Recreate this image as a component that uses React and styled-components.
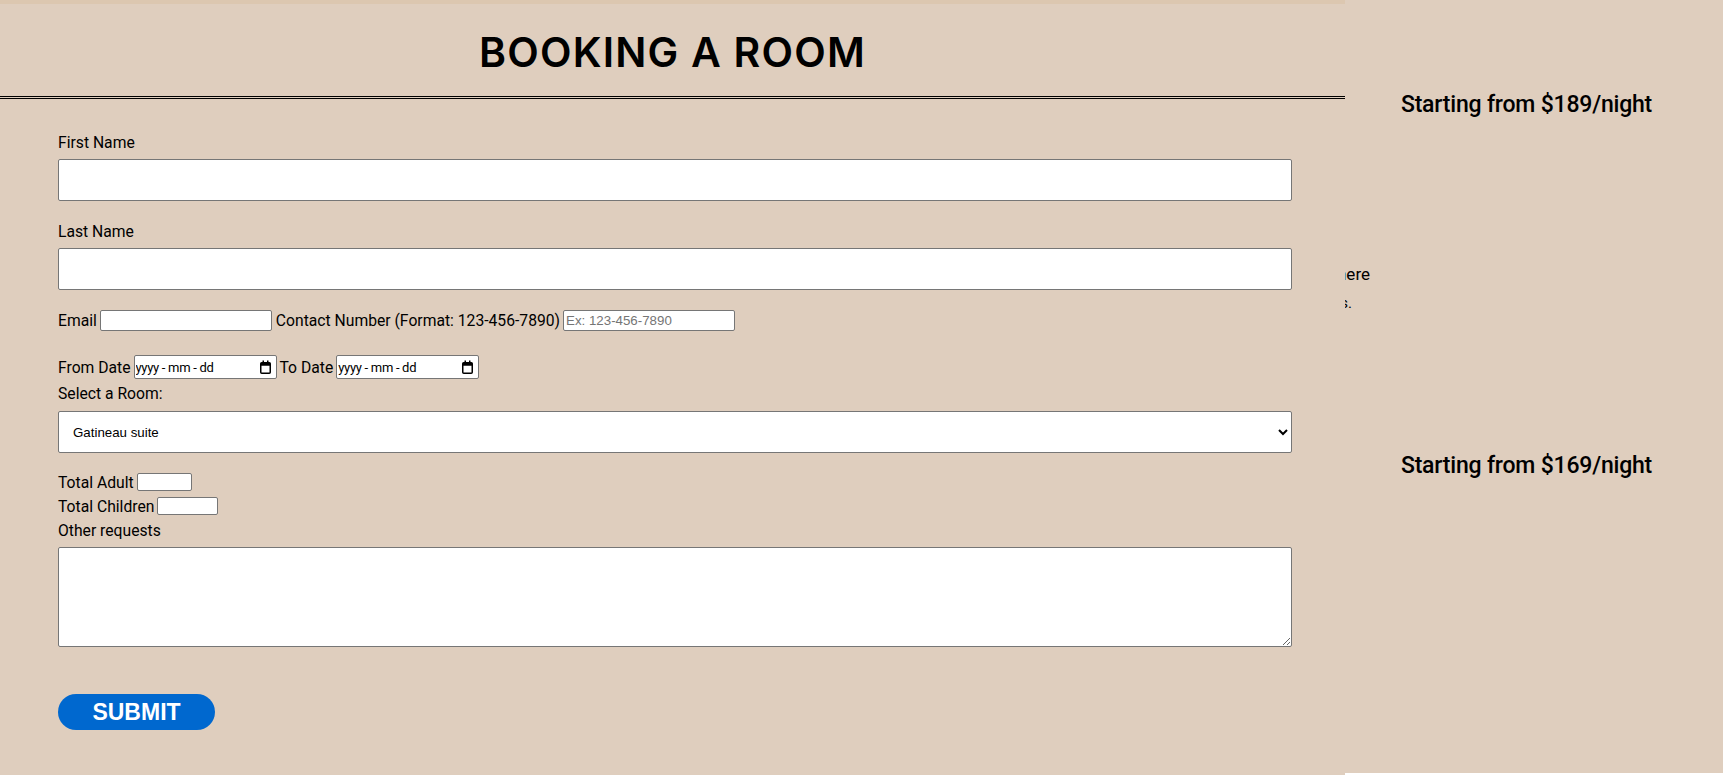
import styled, { createGlobalStyle } from 'styled-components'

const GlobalStyle = createGlobalStyle`
  html, body {
    margin: 0;
    padding: 0;
    background: #ffffff;
  }
  body {
    font-family: Roboto, "Liberation Sans", sans-serif;
    color: #000;
  }
`

const Page = styled.div`
  height: 773px;
  background: #dfcebe;
  padding-top: 90px;
  box-sizing: border-box;
  overflow: hidden;
`

const RoomCard = styled.section`
  display: grid;
  grid-template-columns: 1fr 393px;
  margin-top: ${p => p.$top || 0}px;
`

const Price = styled.h3`
  grid-column: 2;
  margin: 0;
  text-align: center;
  font-size: 23px;
  font-weight: 500;
  line-height: 30px;
  letter-spacing: -0.2px;
`

const Description = styled.div`
  grid-column: 1 / -1;
  margin-top: 140px;
`

const DescLine = styled.p`
  margin: 0;
  text-align: right;
  font-family: Roboto, sans-serif;
  font-size: ${p => p.$size}px;
  line-height: 29px;
  white-space: nowrap;
  padding-right: ${p => p.$inset}px;
`

const Overlay = styled.div`
  position: fixed;
  top: 0;
  left: 0;
  width: 1345px;
  height: 100vh;
  background: #dfcebe;
  border-top: 4px solid #dcc7b0;
  box-sizing: border-box;
  font-family: Roboto, "Liberation Sans", sans-serif;
`

const Header = styled.header`
  height: 92px;
  display: flex;
  align-items: center;
  justify-content: center;
  border-bottom: 3px double #000;
`

const Title = styled.h1`
  margin: 4px 0 0;
  font-family: Inter, "DejaVu Sans", sans-serif;
  font-weight: 600;
  font-size: 41px;
  letter-spacing: 1.2px;
  color: #000;
`

const Form = styled.form`
  padding: 33px 53px 0 58px;
`

const Label = styled.label`
  display: block;
  font-size: 15.7px;
  line-height: 21px;
  margin-bottom: ${p => p.$after ?? 6}px;
`

const WideInput = styled.input`
  display: block;
  width: 100%;
  height: 42px;
  box-sizing: border-box;
  border: 1px solid #767676;
  border-radius: 2px;
  background: #fff;
  margin: 0 0 20px;
`

const InlineRow = styled.div`
  display: flex;
  align-items: center;
  gap: 3px;
  height: ${p => p.$h || 21}px;
  margin-bottom: ${p => p.$after || 0}px;
  font-size: 15.7px;
`

const SmallInput = styled.input`
  width: ${p => p.$w}px;
  height: ${p => p.$h || 21}px;
  box-sizing: border-box;
  border: 1px solid #767676;
  border-radius: 2px;
  background: #fff;
  padding: 1px 2px;
  margin: 0 1px 0 0;
  font-family: "Liberation Sans", Arial, sans-serif;
  font-size: 13.3px;

  &::placeholder {
    color: #757575;
  }
`

const DateField = styled.span`
  display: inline-flex;
  align-items: center;
  width: 143px;
  height: 24px;
  box-sizing: border-box;
  border: 1px solid #767676;
  border-radius: 2px;
  background: #fff;
  padding: 0 4px 0 1px;
`

const DateText = styled.input`
  flex: 1;
  min-width: 0;
  border: none;
  outline: none;
  padding: 0;
  background: transparent;
  font-family: Roboto, sans-serif;
  font-size: 13px;
  letter-spacing: -0.3px;

  &::placeholder {
    color: #000;
  }
`

const RoomSelect = styled.select`
  display: block;
  width: 100%;
  height: 42px;
  box-sizing: border-box;
  border: 1px solid #767676;
  border-radius: 2px;
  background: #fff;
  padding: 0 10px;
  font-family: "Liberation Sans", Arial, sans-serif;
  font-size: 13.3px;
  color: #000;
  margin-bottom: 17px;
`

const Requests = styled.textarea`
  display: block;
  width: 100%;
  height: 100px;
  box-sizing: border-box;
  border: 1px solid #767676;
  border-radius: 2px;
  background: #fff;
  margin: 5px 0 47px;
`

const SubmitButton = styled.button`
  width: 157px;
  height: 36px;
  border: none;
  border-radius: 18px;
  background: #0068cf;
  color: #fff;
  font-family: "Liberation Sans", Arial, sans-serif;
  font-weight: 700;
  font-size: 23px;
  cursor: pointer;
`

function CalendarIcon() {
  return (
    <svg width="13" height="14" viewBox="0 0 13 14" aria-hidden="true">
      <rect x="1.75" y="2.75" width="9.5" height="10.5" rx="1" fill="none" stroke="#000" strokeWidth="1.5" />
      <rect x="1.75" y="2.75" width="9.5" height="3" fill="#000" />
      <rect x="3.5" y="0.5" width="1.5" height="3" fill="#000" />
      <rect x="8" y="0.5" width="1.5" height="3" fill="#000" />
    </svg>
  )
}

function DateInput() {
  return (
    <DateField>
      <DateText type="text" placeholder="yyyy - mm - dd" />
      <CalendarIcon />
    </DateField>
  )
}

export default function App() {
  return (
    <>
      <GlobalStyle />
      <Page>
        <RoomCard>
          <Price>Starting from $189/night</Price>
          <Description>
            <DescLine $size={17} $inset={353}>Unwind in a bright suite overlooking the river, where</DescLine>
            <DescLine $size={15} $inset={371}>breakfast is served every morning for our guests.</DescLine>
          </Description>
        </RoomCard>
        <RoomCard $top={133}>
          <Price>Starting from $169/night</Price>
        </RoomCard>
      </Page>

      <Overlay>
        <Header>
          <Title>BOOKING A ROOM</Title>
        </Header>
        <Form onSubmit={e => e.preventDefault()}>
          <Label htmlFor="first">First Name</Label>
          <WideInput id="first" type="text" />

          <Label htmlFor="last">Last Name</Label>
          <WideInput id="last" type="text" />

          <InlineRow $after={24}>
            <span>Email</span>
            <SmallInput $w={172} type="email" />
            <span>Contact Number (Format: 123-456-7890)</span>
            <SmallInput $w={172} type="tel" placeholder="Ex: 123-456-7890" />
          </InlineRow>

          <InlineRow $h={24} $after={4}>
            <span>From Date</span>
            <DateInput />
            <span>To Date</span>
            <DateInput />
          </InlineRow>

          <Label htmlFor="room" $after={7}>Select a Room:</Label>
          <RoomSelect id="room" defaultValue="gatineau">
            <option value="gatineau">Gatineau suite</option>
            <option value="ottawa">Ottawa suite</option>
          </RoomSelect>

          <InlineRow $h={24}>
            <span>Total Adult</span>
            <SmallInput $w={55} $h={18} type="number" />
          </InlineRow>
          <InlineRow $h={24}>
            <span>Total Children</span>
            <SmallInput $w={61} $h={18} type="number" />
          </InlineRow>
          <InlineRow $h={24}>
            <span>Other requests</span>
          </InlineRow>
          <Requests />

          <SubmitButton type="submit">SUBMIT</SubmitButton>
        </Form>
      </Overlay>
    </>
  )
}
